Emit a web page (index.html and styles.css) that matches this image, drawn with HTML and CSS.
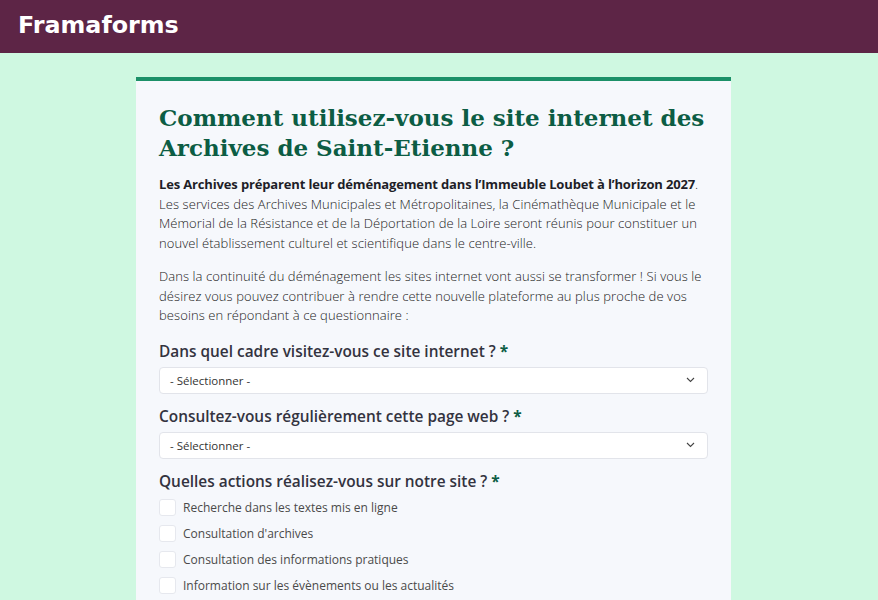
FILE: index.html
```html
<!DOCTYPE html>
<html lang="fr">
<head>
<meta charset="utf-8">
<title>Framaforms</title>
<link rel="stylesheet" href="styles.css">
</head>
<body>
<header class="topbar">
  <div class="brand">Framaforms</div>
</header>
<main class="page">
  <section class="card">
    <h1 class="title">Comment utilisez-vous le site internet des Archives de Saint-Etienne ?</h1>
    <p class="intro"><strong>Les Archives préparent leur déménagement dans l’Immeuble Loubet à l’horizon 2027</strong>. Les services des Archives Municipales et Métropolitaines, la Cinémathèque Municipale et le Mémorial de la Résistance et de la Déportation de la Loire seront réunis pour constituer un nouvel établissement culturel et scientifique dans le centre-ville.</p>
    <p class="intro">Dans la continuité du déménagement les sites internet vont aussi se transformer ! Si vous le désirez vous pouvez contribuer à rendre cette nouvelle plateforme au plus proche de vos besoins en répondant à ce questionnaire :</p>

    <div class="field">
      <label class="label">Dans quel cadre visitez-vous ce site internet ? <span class="req">*</span></label>
      <div class="select"><span>- Sélectionner -</span>
        <svg class="chev" width="9" height="6" viewBox="0 0 9 6"><path d="M1 1l3.5 3.5L8 1" fill="none" stroke="#444" stroke-width="1.1"/></svg>
      </div>
    </div>

    <div class="field">
      <label class="label">Consultez-vous régulièrement cette page web ? <span class="req">*</span></label>
      <div class="select"><span>- Sélectionner -</span>
        <svg class="chev" width="9" height="6" viewBox="0 0 9 6"><path d="M1 1l3.5 3.5L8 1" fill="none" stroke="#444" stroke-width="1.1"/></svg>
      </div>
    </div>

    <div class="field">
      <label class="label">Quelles actions réalisez-vous sur notre site ? <span class="req">*</span></label>
      <ul class="checks">
        <li><span class="box"></span>Recherche dans les textes mis en ligne</li>
        <li><span class="box"></span>Consultation d'archives</li>
        <li><span class="box"></span>Consultation des informations pratiques</li>
        <li><span class="box"></span>Information sur les évènements ou les actualités</li>
      </ul>
    </div>
  </section>
</main>
</body>
</html>
```
FILE: styles.css
```css
* { box-sizing: border-box; }
html, body { margin: 0; padding: 0; }
body {
  background: #cff8e1;
  font-family: "Open Sans", "Noto Sans", sans-serif;
  color: #333;
  height: 600px;
  overflow: hidden;
}
.topbar {
  background: #5d2546;
  height: 53px;
  display: flex;
  align-items: center;
  padding-left: 18px;
}
.brand {
  font-family: "DejaVu Sans", sans-serif;
  font-weight: bold;
  font-size: 23.8px;
  color: #fff;
  margin-top: -3px;
}
.page {
  padding: 24px 0 0 136px;
}
.card {
  width: 595px;
  background: #f6f8fc;
  border-top: 4px solid #1c9068;
  padding: 22px 23px 0 23px;
  min-height: 600px;
}
.title {
  font-family: "DejaVu Serif", serif;
  font-weight: bold;
  font-size: 23px;
  line-height: 30px;
  color: #0c5d44;
  margin: 0 0 12px 0;
}
.intro {
  font-size: 13px;
  font-weight: 300;
  letter-spacing: 0.08px;
  line-height: 19.5px;
  margin: 0 0 14px 0;
  color: #222;
}
.intro + .intro { margin-bottom: 16px; }
.intro strong { color: #1e1e28; font-weight: bold; letter-spacing: -0.15px; }
.field { margin-top: 13px; }
.field:first-of-type { margin-top: 14px; }
.label {
  display: block;
  font-size: 15.4px;
  font-weight: 600;
  color: #33333f;
  line-height: 20px;
  margin-bottom: 5px;
}
.req { color: #0c5d44; font-weight: bold; }
.select {
  height: 27px;
  background: #fff;
  border: 1px solid #e2e4ea;
  border-radius: 4px;
  display: flex;
  align-items: center;
  justify-content: space-between;
  padding: 0 12px 0 10px;
  font-size: 11.5px;
  color: #333;
}
.checks {
  list-style: none;
  margin: -2px 0 0 0;
  padding: 0;
}
.checks li {
  display: flex;
  align-items: center;
  height: 26px;
  font-size: 12px;
  color: #4a4a4a;
}
.box {
  width: 17px;
  height: 17px;
  background: #fff;
  border: 1px solid #e6e8ee;
  border-radius: 3px;
  margin-right: 7px;
}
```
